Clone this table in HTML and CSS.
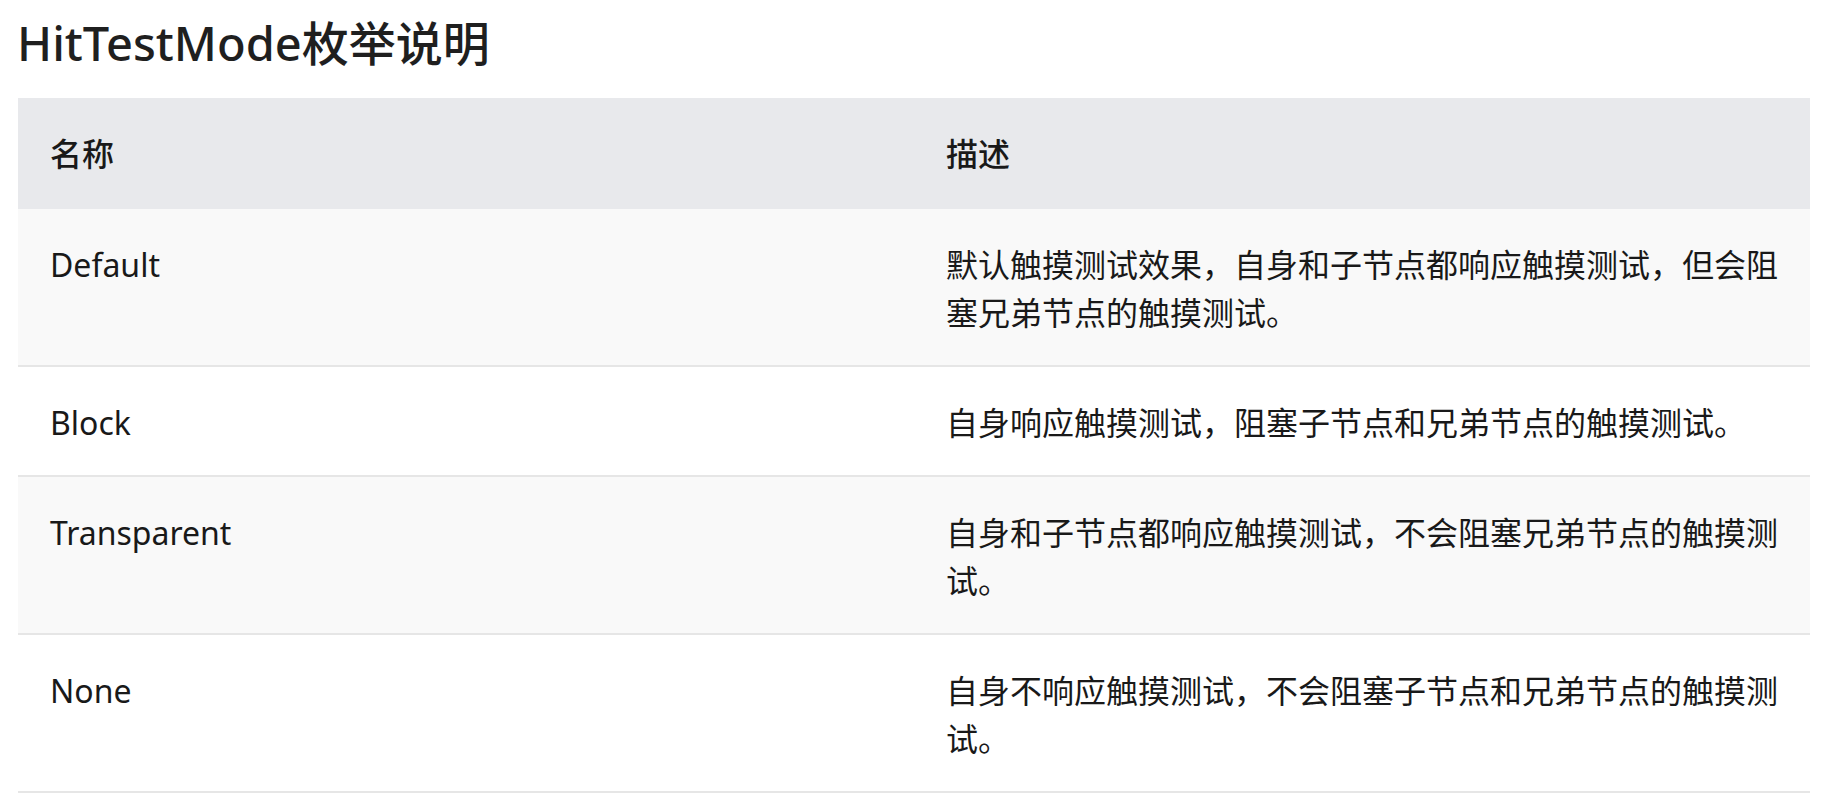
FILE: index.html
```html
<!DOCTYPE html>
<html lang="zh-CN">
<head>
  <meta charset="UTF-8">
  <meta name="viewport" content="width=device-width, initial-scale=1.0">
  <title>HitTestMode枚举说明</title>
  <link rel="stylesheet" href="styles.css">
</head>
<body>
  <div class="doc">
    <h1 class="doc-title">HitTestMode枚举说明</h1>
    <table class="enum-table">
      <thead>
        <tr>
          <th>名称</th>
          <th>描述</th>
        </tr>
      </thead>
      <tbody>
        <tr>
          <td>Default</td>
          <td>默认触摸测试效果，自身和子节点都响应触摸测试，但会阻塞兄弟节点的触摸测试。</td>
        </tr>
        <tr>
          <td>Block</td>
          <td>自身响应触摸测试，阻塞子节点和兄弟节点的触摸测试。</td>
        </tr>
        <tr>
          <td>Transparent</td>
          <td>自身和子节点都响应触摸测试，不会阻塞兄弟节点的触摸测试。</td>
        </tr>
        <tr>
          <td>None</td>
          <td>自身不响应触摸测试，不会阻塞子节点和兄弟节点的触摸测试。</td>
        </tr>
      </tbody>
    </table>
  </div>
</body>
</html>
```

FILE: styles.css
```css
body {
  margin: 0;
  font-family: 'Noto Sans', 'Noto Sans CJK SC', sans-serif;
  color: #191919;
  background: #fff;
}

.doc {
  padding: 11px 14px 0 18px;
}

.doc-title {
  margin: 0 0 23px -1px;
  font-size: 47px;
  line-height: 64px;
  font-weight: 500;
  color: #1f1f1f;
}

.enum-table {
  width: 100%;
  border-collapse: collapse;
  table-layout: fixed;
  font-size: 32px;
  line-height: 48px;
}

.enum-table th,
.enum-table td {
  width: 50%;
  padding: 32px 28px 28px 32px;
  text-align: left;
  vertical-align: top;
}

.enum-table th {
  background-color: #e8e9ec;
  font-weight: 500;
  padding-bottom: 31px;
}

.enum-table td {
  font-weight: 400;
  border-bottom: 2px solid #e6e6e6;
}

.enum-table tbody tr:nth-child(odd) {
  background-color: #f9f9f9;
}

.enum-table tbody tr:nth-child(even) {
  background-color: #fff;
}
```
